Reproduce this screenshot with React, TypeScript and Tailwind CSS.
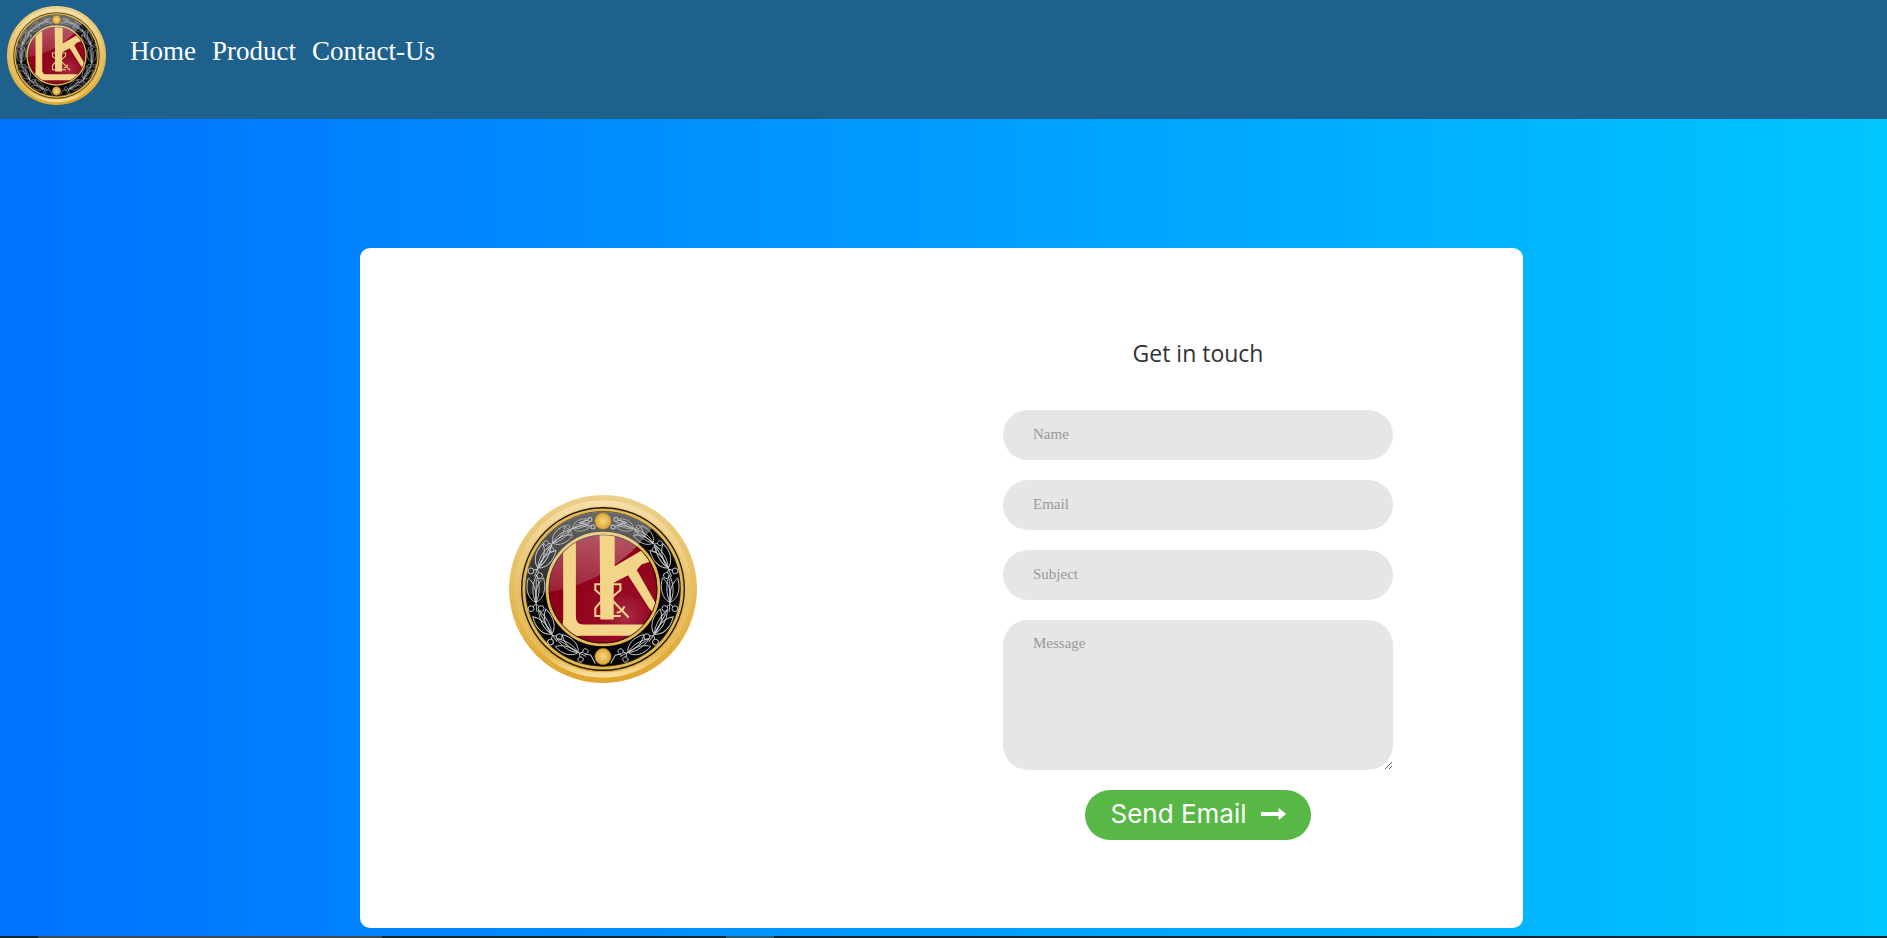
import { useId } from "react";

type Point = [number, number];

// Twigs of the left half of the wreath: angle clockwise from the bottom, and size.
const twigs: Point[] = [
  [31, 1],
  [59, 1.08],
  [89, 1.08],
  [118, 1.05],
  [141, 0.9],
  [160, 0.7],
];

function Twig({ angle, size }: { angle: number; size: number }) {
  return (
    <g transform={`rotate(${angle} 309 311) translate(309 512) scale(${size})`}>
      <g fill="none" stroke="#c4c8cd" strokeWidth="2.6">
        <path d="M60 -2 L34 0" />
        <path d="M34 0 C24 -22 -4 -30 -34 -22 C-22 -6 2 4 34 0Z" />
        <path d="M34 0 C24 22 -4 30 -34 20 C-22 6 2 -4 34 0Z" />
        <path d="M34 0 C12 -12 -18 -12 -42 -3 C-18 10 12 12 34 0Z" />
        <path d="M34 0 L-32 -2" />
        <path d="M38 0 L46 -9 M38 0 L46 9" />
        <circle cx="51" cy="-14" r="8" />
        <circle cx="51" cy="14" r="8" />
      </g>
    </g>
  );
}

function HalfWreath() {
  return (
    <g>
      {twigs.map(([angle, size]) => (
        <Twig key={angle} angle={angle} size={size} />
      ))}
      <g fill="none" stroke="#c4c8cd" strokeWidth="3">
        <circle cx="270" cy="103" r="6" />
        <circle cx="279" cy="126" r="6" />
        <path d="M264 104 L240 112 L273 124" />
        <path d="M256 506 L272 508 L286 534" />
      </g>
    </g>
  );
}

function Emblem({ className }: { className: string }) {
  const id = useId();
  const dots: Point[] = [
    [309, 108],
    [309, 513],
  ];
  return (
    <svg viewBox="28 30 562 562" className={className} role="img" aria-label="LK">
      <defs>
        <linearGradient id={`${id}rim`} x1="0" y1="0" x2="0" y2="1">
          <stop offset="0" stopColor="#ecd08a" />
          <stop offset="0.5" stopColor="#e5bd5c" />
          <stop offset="1" stopColor="#e0a52b" />
        </linearGradient>
        <linearGradient id={`${id}bevel`} x1="0" y1="0" x2="0" y2="1">
          <stop offset="0" stopColor="#f5deaa" />
          <stop offset="0.5" stopColor="#e8c167" />
          <stop offset="0.88" stopColor="#e6ba56" />
          <stop offset="1" stopColor="#f7dc98" />
        </linearGradient>
        <radialGradient id={`${id}red`} cx="0.7" cy="0.74" r="0.6">
          <stop offset="0" stopColor="#ab2c46" />
          <stop offset="0.35" stopColor="#960a24" />
          <stop offset="1" stopColor="#8f0018" />
        </radialGradient>
        <radialGradient id={`${id}dot`}>
          <stop offset="0" stopColor="#f6d689" />
          <stop offset="1" stopColor="#dda62f" />
        </radialGradient>
        <linearGradient id={`${id}gloss`} x1="0.5" y1="0" x2="0.4" y2="1">
          <stop offset="0" stopColor="#fff" stopOpacity="0.42" />
          <stop offset="0.5" stopColor="#fff" stopOpacity="0.28" />
          <stop offset="1" stopColor="#fff" stopOpacity="0.12" />
        </linearGradient>
        <clipPath id={`${id}disc`}>
          <circle cx="309" cy="311" r="161" />
        </clipPath>
        <clipPath id={`${id}band`}>
          <circle cx="309" cy="311" r="232" />
        </clipPath>
      </defs>

      <circle cx="309" cy="311" r="281" fill={`url(#${id}rim)`} />
      <circle cx="309" cy="311" r="257" fill="none" stroke={`url(#${id}bevel)`} strokeWidth="16" />
      <circle cx="309" cy="311" r="243" fill="#e0b750" stroke="#1c1608" strokeWidth="4" />
      <circle cx="309" cy="311" r="231" fill="#050505" stroke="#2a2008" strokeWidth="3" />

      <circle cx="309" cy="311" r="167" fill={`url(#${id}red)`} stroke="#e0b750" strokeWidth="9" />
      <circle cx="309" cy="311" r="161" fill="none" stroke="#2a1405" strokeWidth="3" />

      <g clipPath={`url(#${id}band)`}>
        <path
          d="M60 328 C150 328 260 300 330 250 C400 200 455 150 490 60 L60 60Z"
          fill={`url(#${id}gloss)`}
        />
      </g>

      <HalfWreath />
      <g transform="translate(618 0) scale(-1 1)">
        <HalfWreath />
      </g>

      <g clipPath={`url(#${id}disc)`}>
        <path
          d="M190 140 H228 V396 Q229 416 250 417 H460 V451 H240 Q226 451 216 462 L180 430 Q190 420 190 402Z"
          fill="#f3d58a"
        />
        <path
          d="M299 140 H344 V243 L424 196 L470 222 L424 238 L410 254 L480 378 L462 384 L448 370 L384 270 L341 292 V402 H301Z"
          fill="#f3d58a"
        />
        <path
          d="M301 327 L286 314 V297 H307 M338 297 H361 V314 L338 334 M305 346 L286 368 V392 H362 M338 346 L386 396 M350 382 Q366 380 373 363"
          fill="none"
          stroke="#f3d58a"
          strokeWidth="6"
        />
      </g>

      {dots.map(([cx, cy]) => (
        <circle
          key={cy}
          cx={cx}
          cy={cy}
          r="24"
          fill={`url(#${id}dot)`}
          stroke="#c8962c"
          strokeWidth="2"
        />
      ))}
    </svg>
  );
}

function LongArrow() {
  return (
    <svg viewBox="0 0 25 12" className="h-3 w-[25px]" fill="currentColor" aria-hidden="true">
      <path d="M0 4.4 Q0 4 0.4 4 H17.5 V0.5 Q17.6 0 18.1 0.2 L24.8 5.7 Q25 6 24.8 6.3 L18.1 11.8 Q17.6 12 17.5 11.5 V8 H0.4 Q0 8 0 7.6Z" />
    </svg>
  );
}

const links = [
  { label: "Home", href: "#home" },
  { label: "Product", href: "#product" },
  { label: "Contact-Us", href: "#contact" },
];

const fields = [
  { label: "Name", name: "name", type: "text" },
  { label: "Email", name: "email", type: "email" },
  { label: "Subject", name: "subject", type: "text" },
];

export default function App() {
  return (
    <div className="flex min-h-screen flex-col font-['Liberation_Serif',serif]">
      <header className="flex items-start bg-[#1f618d] px-[7px] pt-[6px] pb-[14px]">
        <a href="#home" className="shrink-0">
          <Emblem className="size-[99px]" />
        </a>
        <nav className="ml-6 flex gap-4 pt-[30px] text-[27px] leading-[30px] text-white">
          {links.map((link) => (
            <a key={link.label} href={link.href}>
              {link.label}
            </a>
          ))}
        </nav>
      </header>

      <main
        id="contact"
        className="flex flex-1 items-start justify-center bg-linear-to-r/srgb from-[#0072ff] to-[#00c6ff] pt-[129px] pr-1 pb-2"
      >
        <section className="flex w-full max-w-[1163px] items-center justify-between rounded-[10px] bg-white pt-[90px] pr-[130px] pb-[88px] pl-[149px]">
          <Emblem className="size-[188px] shrink-0" />

          <form className="flex w-[390px] flex-col gap-5" onSubmit={(e) => e.preventDefault()}>
            <h1 className="pb-[22px] text-center font-['Open_Sans',sans-serif] text-[23px] leading-[30px] text-[#333]">
              Get in touch
            </h1>
            {fields.map((field) => (
              <input
                key={field.name}
                type={field.type}
                name={field.name}
                aria-label={field.label}
                placeholder={field.label}
                className="h-[50px] w-full rounded-[25px] bg-[#e6e6e6] px-[30px] pb-[2px] text-[15px] text-[#666] placeholder:text-[#999]"
              />
            ))}
            <textarea
              name="message"
              aria-label="Message"
              placeholder="Message"
              className="block h-[150px] w-full resize rounded-[25px] bg-[#e6e6e6] px-[30px] py-[15px] text-[15px] leading-4 text-[#666] placeholder:text-[#999]"
            />
            <button
              type="submit"
              className="flex h-[50px] items-center gap-[14px] self-center rounded-[25px] bg-[#57b846] px-[25px] pb-[2px] font-['Inter',sans-serif] text-[26px] leading-none text-white"
            >
              Send Email
              <LongArrow />
            </button>
          </form>
        </section>
      </main>

      <div className="flex h-[2px] bg-[#14262f]">
        <div className="ml-[38px] w-[344px] bg-[#3b4a55]" />
        <div className="ml-[344px] w-12 bg-[#2b5a70]" />
      </div>
    </div>
  );
}
